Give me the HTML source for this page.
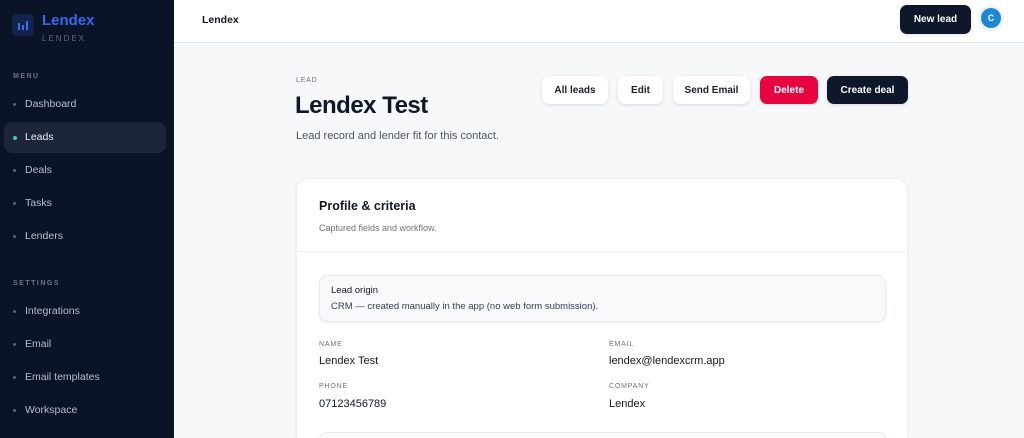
<!DOCTYPE html>
<html style="height:438px;overflow:hidden"><head><style>
*{box-sizing:border-box;margin:0;padding:0}
body{width:1024px;height:438px;overflow:hidden;font-family:"Liberation Sans",sans-serif;background:#f7f8fa;position:relative}
.sb{position:absolute;left:0;top:0;width:174px;height:438px;background:#0b1326;}
.logo{position:absolute;left:12px;top:14px;width:22px;height:22px;border-radius:5px;background:#15224a;}
.logo i{position:absolute;bottom:6px;width:2px;background:#3d6cf0}
.brand{position:absolute;left:42px;top:12px;color:#2f6bf0;font-size:15px;font-weight:bold}
.sub{position:absolute;left:42px;top:34px;color:#5f6b82;font-size:8px;letter-spacing:2px}
.sec{position:absolute;left:13px;color:#6b7589;font-size:7px;letter-spacing:1.5px;font-weight:bold}
.it{position:absolute;left:4px;width:162px;height:31px;border-radius:8px;color:#b7bfcd;font-size:10.5px;padding-left:21px;line-height:31px}
.it:before{content:"";position:absolute;left:9px;top:14px;width:3px;height:3px;border-radius:50%;background:#58637a}
.it.on{background:#1c2638;color:#e6eaf1}
.it.on:before{background:#2dd4a0;width:4px;height:4px;top:13.5px}
.top{position:absolute;left:174px;top:0;width:850px;height:43px;background:#fff;border-bottom:1px solid #e5e7eb}
.btn{position:absolute;height:28px;border-radius:7px;font-size:10px;font-weight:bold;line-height:29px;text-align:center;background:#fff;color:#1a1f2b;box-shadow:0 1px 3px rgba(0,0,0,.12)}
.card{position:absolute;left:296px;top:178px;width:612px;height:260px;background:#fff;border-radius:12px 12px 0 0;box-shadow:0 1px 3px rgba(0,0,0,.08);border:1px solid #eef0f3;border-bottom:none;overflow:hidden}
.lbl{position:absolute;font-size:7px;color:#6b7280;letter-spacing:.8px}
.val{position:absolute;font-size:11px;color:#111827}
</style></head><body>
<div class="sb">
<div class="logo"><i style="left:6px;height:7px"></i><i style="left:10px;height:5px"></i><i style="left:14px;height:9px"></i></div>
<div class="brand">Lendex</div><div class="sub">LENDEX</div>
<div class="sec" style="top:73px">MENU</div>
<div class="it" style="top:89px">Dashboard</div>
<div class="it on" style="top:122px">Leads</div>
<div class="it" style="top:155px">Deals</div>
<div class="it" style="top:188px">Tasks</div>
<div class="it" style="top:221px">Lenders</div>
<div class="sec" style="top:280px">SETTINGS</div>
<div class="it" style="top:296px">Integrations</div>
<div class="it" style="top:329px">Email</div>
<div class="it" style="top:362px">Email templates</div>
<div class="it" style="top:395px">Workspace</div>
</div>
<div class="top"><div style="position:absolute;left:28px;top:14px;font-size:10.5px;color:#111827;font-weight:bold">Lendex</div></div>
<div class="btn" style="left:900px;top:5px;width:71px;height:29px;line-height:30px;background:#0f172a;color:#fff">New lead</div>
<div style="position:absolute;left:981px;top:8px;width:20px;height:20px;border-radius:50%;background:#1c86d8;color:#fff;font-size:9px;font-weight:bold;text-align:center;line-height:20px;box-shadow:0 0 0 3px #f1f3f6">C</div>
<div style="position:absolute;left:296px;top:77px;font-size:7px;color:#6b7280;letter-spacing:.8px">LEAD</div>
<div style="position:absolute;left:295px;top:92px;font-size:24px;color:#0f172a;font-weight:bold;letter-spacing:-.5px">Lendex Test</div>
<div style="position:absolute;left:296px;top:130px;font-size:11px;color:#4b5563">Lead record and lender fit for this contact.</div>
<div class="btn" style="left:542px;top:76px;width:66px">All leads</div>
<div class="btn" style="left:618px;top:76px;width:45px">Edit</div>
<div class="btn" style="left:673px;top:76px;width:77px">Send Email</div>
<div class="btn" style="left:760px;top:76px;width:58px;background:#e8043f;color:#fff">Delete</div>
<div class="btn" style="left:827px;top:76px;width:81px;background:#0f172a;color:#fff">Create deal</div>
<div class="card">
<div style="position:absolute;left:22px;top:20px;font-size:12.5px;font-weight:bold;color:#111827">Profile &amp; criteria</div>
<div style="position:absolute;left:22px;top:44px;font-size:9px;color:#6b7280">Captured fields and workflow.</div>
<div style="position:absolute;left:0;right:0;top:72px;border-top:1px solid #f1f2f5"></div>
<div style="position:absolute;left:22px;top:96px;width:567px;height:47px;border-radius:9px;background:#f8f9fb;border:1px solid #e8eaee;box-shadow:0 1px 3px rgba(0,0,0,.08)">
<div style="position:absolute;left:11px;top:9px;font-size:9.5px;color:#111827">Lead origin</div>
<div style="position:absolute;left:11px;top:25px;font-size:9.5px;color:#374151">CRM — created manually in the app (no web form submission).</div></div>
<div class="lbl" style="left:22px;top:162px">NAME</div><div class="val" style="left:22px;top:176px">Lendex Test</div>
<div class="lbl" style="left:312px;top:162px">EMAIL</div><div class="val" style="left:312px;top:176px">lendex@lendexcrm.app</div>
<div class="lbl" style="left:22px;top:204px">PHONE</div><div class="val" style="left:22px;top:219px">07123456789</div>
<div class="lbl" style="left:312px;top:204px">COMPANY</div><div class="val" style="left:312px;top:219px">Lendex</div>
<div style="position:absolute;left:22px;top:253px;width:567px;height:7px;border-radius:9px 9px 0 0;border:1px solid #e8eaee;border-bottom:none;background:#fafbfc"></div>
</div>
</body></html>
